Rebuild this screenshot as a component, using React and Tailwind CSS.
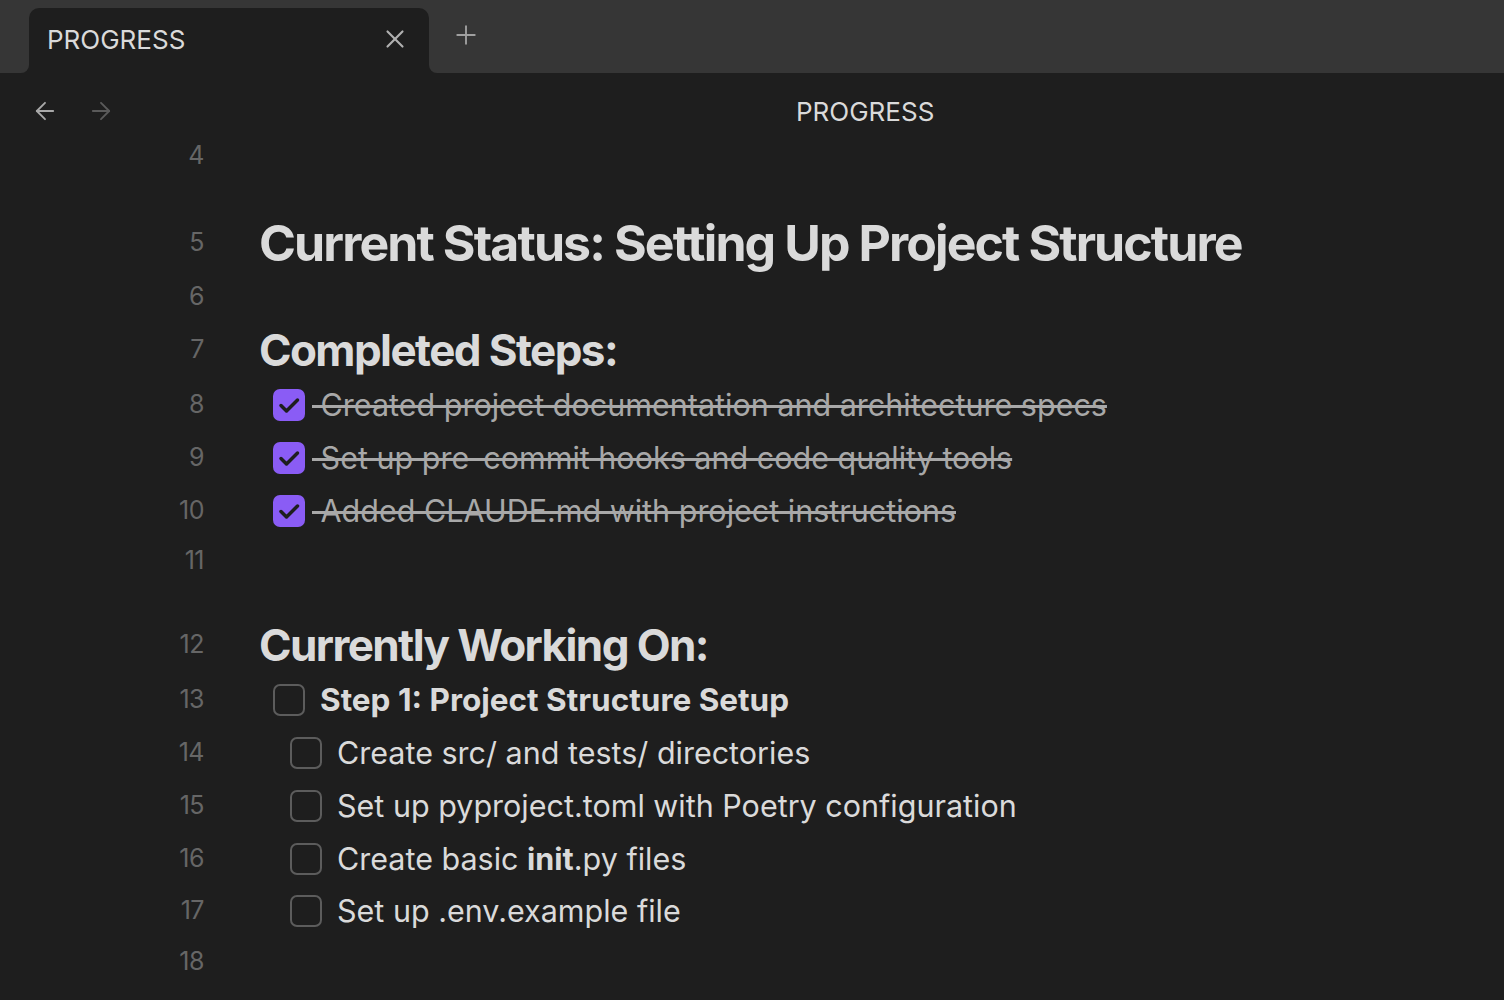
import React from 'react';
import { ArrowLeft, ArrowRight, X, Plus } from 'lucide-react';

const Gutter = ({ n }) => (
    <div className="w-[204px] shrink-0 text-right text-[25px] text-[#666666] tracking-[-0.02em]">{n}</div>
);

const Checked = ({ text }) => (
    <div className="flex items-center ml-[14px]">
        <div className="w-[32px] h-[32px] rounded-[7px] bg-[#8a5cf5] flex items-center justify-center shrink-0">
            <svg width="32" height="32" viewBox="0 0 32 32" fill="none">
                <path d="M8 16.5 L13.5 22 L24.5 11" stroke="#1e1e1e" strokeWidth="3.5" strokeLinecap="round" strokeLinejoin="round" />
            </svg>
        </div>
        <span className="ml-[7px] text-[30.5px] text-[#a8a8a8] line-through decoration-[2.5px] decoration-[#a8a8a8] whitespace-pre">
            {' ' + text}
        </span>
    </div>
);

const Unchecked = ({ indent, children, bold }) => (
    <div className={`flex items-center ${indent ? 'ml-[31px]' : 'ml-[14px]'}`}>
        <div className="w-[32px] h-[32px] rounded-[7px] border-2 border-[#5c5c5c] shrink-0" />
        <span className={`ml-[15px] text-[#dadada] ${bold ? 'font-bold text-[31.5px]' : 'text-[30.5px]'}`}>{children}</span>
    </div>
);

const Row = ({ n, h, mt, children }) => (
    <div className={`flex items-center ${h} ${mt || ''}`}>
        <Gutter n={n} />
        <div className="ml-[55px] flex items-center">{children}</div>
    </div>
);

export default function App() {
    return (
        <div className="w-[1504px] h-[1000px] bg-[#1e1e1e] overflow-hidden" style={{ fontFamily: 'Inter, "Noto Sans", sans-serif' }}>
            {/* Tab bar */}
            <div className="h-[73px] bg-[#363636] flex items-end">
                <div className="relative ml-[29px] w-[400px] h-[65px] bg-[#1e1e1e] rounded-t-[10px] flex items-center pl-[18px] pr-[19px] pb-[3px]">
                    <span className="absolute -left-[8px] bottom-0 w-[8px] h-[8px] bg-[#1e1e1e]">
                        <span className="block w-full h-full bg-[#363636] rounded-br-[8px]" />
                    </span>
                    <span className="absolute -right-[8px] bottom-0 w-[8px] h-[8px] bg-[#1e1e1e]">
                        <span className="block w-full h-full bg-[#363636] rounded-bl-[8px]" />
                    </span>
                    <span className="text-[26px] text-[#dadada] flex-1">PROGRESS</span>
                    <X size={30} strokeWidth={1.7} className="text-[#b0b0b0]" />
                </div>
                <div className="self-start mt-[20px] ml-[22px]">
                    <Plus size={30} strokeWidth={1.5} className="text-[#a0a0a0]" />
                </div>
            </div>

            {/* Nav bar */}
            <div className="h-[57px] pt-[19px] flex items-center">
                <ArrowLeft size={28} strokeWidth={1.6} className="ml-[31px] text-[#a8a8a8]" />
                <ArrowRight size={28} strokeWidth={1.6} className="ml-[28px] text-[#5a5a5a]" />
                <span className="ml-[681px] text-[26px] text-[#dadada]">PROGRESS</span>
            </div>

            {/* Editor */}
            <div className="text-[#dadada]">
                <Row n="4" h="h-[52px]" />
                <Row n="5" h="h-[58px]" mt="mt-[32px]">
                    <h1 className="text-[50px] font-bold tracking-[-0.038em] text-[#dadada]">Current Status: Setting Up Project Structure</h1>
                </Row>
                <Row n="6" h="h-[50px]" />
                <Row n="7" h="h-[56px]">
                    <h2 className="text-[44px] font-bold tracking-[-0.036em] text-[#dadada]">Completed Steps:</h2>
                </Row>
                <Row n="8" h="h-[53px]"><Checked text="Created project documentation and architecture specs" /></Row>
                <Row n="9" h="h-[53px]"><Checked text="Set up pre-commit hooks and code quality tools" /></Row>
                <Row n="10" h="h-[53px]"><Checked text="Added CLAUDE.md with project instructions" /></Row>
                <Row n="11" h="h-[48px]" />
                <Row n="12" h="h-[58px]" mt="mt-[31px]">
                    <h2 className="text-[44px] font-bold tracking-[-0.036em] text-[#dadada]">Currently Working On:</h2>
                </Row>
                <Row n="13" h="h-[52px]"><Unchecked bold>Step 1: Project Structure Setup</Unchecked></Row>
                <Row n="14" h="h-[53px]"><Unchecked indent>Create src/ and tests/ directories</Unchecked></Row>
                <Row n="15" h="h-[53px]"><Unchecked indent>Set up pyproject.toml with Poetry configuration</Unchecked></Row>
                <Row n="16" h="h-[53px]"><Unchecked indent>Create basic <b className="font-bold">init</b>.py files</Unchecked></Row>
                <Row n="17" h="h-[52px]"><Unchecked indent>Set up .env.example file</Unchecked></Row>
                <Row n="18" h="h-[50px]" />
            </div>
        </div>
    );
}
